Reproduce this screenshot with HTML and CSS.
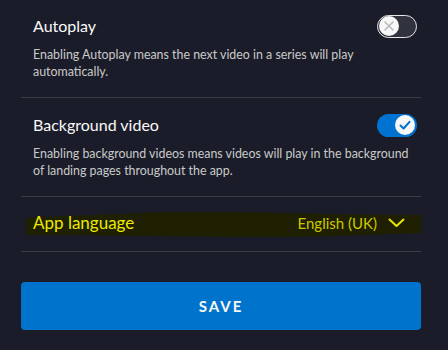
FILE: index.html
```html
<!DOCTYPE html>
<html>
<head>
<meta charset="utf-8">
<link rel="stylesheet" href="styles.css">
</head>
<body>
<div class="panel">
  <section class="setting">
    <div class="head">
      <span class="title">Autoplay</span>
      <span class="toggle off">
        <span class="knob">
          <svg width="20" height="20" viewBox="0 0 20 20"><path d="M6 6 L14 14 M14 6 L6 14" stroke="#b9b9be" stroke-width="1.6" stroke-linecap="round" fill="none"/></svg>
        </span>
      </span>
    </div>
    <p class="desc">Enabling Autoplay means the next video in a series will play automatically.</p>
  </section>
  <section class="setting">
    <div class="head">
      <span class="title">Background video</span>
      <span class="toggle on">
        <span class="knob">
          <svg width="20" height="20" viewBox="0 0 20 20"><path d="M5.5 10.5 L8.6 13.5 L14.5 6.8" stroke="#0072d2" stroke-width="2" stroke-linecap="round" stroke-linejoin="round" fill="none"/></svg>
        </span>
      </span>
    </div>
    <p class="desc">Enabling background videos means videos will play in the background of landing pages throughout the app.</p>
  </section>
  <section class="language">
    <div class="lang-row">
      <svg class="marker" viewBox="0 0 400 27" preserveAspectRatio="none"><path d="M5 6 C40 4 100 2 150 0 C230 -1 300 3 400 3 L400 22 C330 24 290 26 240 26 C180 26 120 25 60 24 L5 24 Z" fill="#1f1f02"/></svg>
      <span class="lang-label">App language</span>
      <span class="lang-value">English (UK)
        <svg class="chev" width="17" height="10" viewBox="0 0 17 10"><path d="M1.5 1.5 L8.5 8 L15.5 1.5" stroke="#e6e600" stroke-width="2" stroke-linecap="round" stroke-linejoin="round" fill="none"/></svg>
      </span>
    </div>
  </section>
  <button class="save">SAVE</button>
</div>
</body>
</html>
```
FILE: styles.css
```css
html, body {
  margin: 0;
  padding: 0;
  background: #1a1d29;
}
body {
  font-family: Lato, "Noto Sans", sans-serif;
  width: 448px;
  height: 350px;
  overflow: hidden;
}
.panel {
  padding: 0 27px 0 21px;
}
.setting {
  padding: 14px 4px 17px 12px;
  border-bottom: 1px solid #3a3c46;
}
.setting + .setting {
  padding-top: 15px;
}
.head {
  display: flex;
  justify-content: space-between;
  align-items: center;
  height: 24px;
}
.title {
  color: #f9f9f9;
  font-size: 16px;
  line-height: 24px;
}
.toggle {
  box-sizing: border-box;
  width: 40px;
  height: 23px;
  border-radius: 12px;
  display: flex;
  align-items: center;
  padding: 0 1px;
}
.toggle.off {
  background: #30333d;
  border: 1px solid #e6e6e6;
  justify-content: flex-start;
}
.toggle.on {
  background: #0072d2;
  justify-content: flex-end;
  padding: 0 2px;
}
.knob {
  width: 20px;
  height: 20px;
  border-radius: 50%;
  background: #f7f7f7;
  display: flex;
}
.desc {
  margin: 8px 0 0;
  color: #cacaca;
  font-size: 12.4px;
  line-height: 17px;
  padding-right: 0;
}
.language {
  padding: 14px 0 16px;
  border-bottom: 1px solid #3a3c46;
}
.lang-row {
  position: relative;
  display: flex;
  justify-content: space-between;
  align-items: center;
  height: 24px;
  padding: 0 16px 0 12px;
}
.marker {
  position: absolute;
  left: 0;
  top: 1px;
  width: 400px;
  height: 26px;
}
.lang-label {
  position: relative;
  color: #eaea00;
  font-size: 17px;
  line-height: 24px;
}
.lang-value {
  position: relative;
  color: #c9c900;
  font-size: 15px;
  line-height: 24px;
  display: flex;
  align-items: center;
}
.chev {
  margin-left: 11px;
}
.save {
  display: block;
  width: 400px;
  height: 48px;
  margin-top: 30px;
  border: 0;
  border-radius: 4px;
  background: #0074cc;
  color: #f9f9f9;
  font-family: Lato, "Noto Sans", sans-serif;
  font-weight: 700;
  font-size: 15px;
  letter-spacing: 2px;
  padding: 0;
}
```
